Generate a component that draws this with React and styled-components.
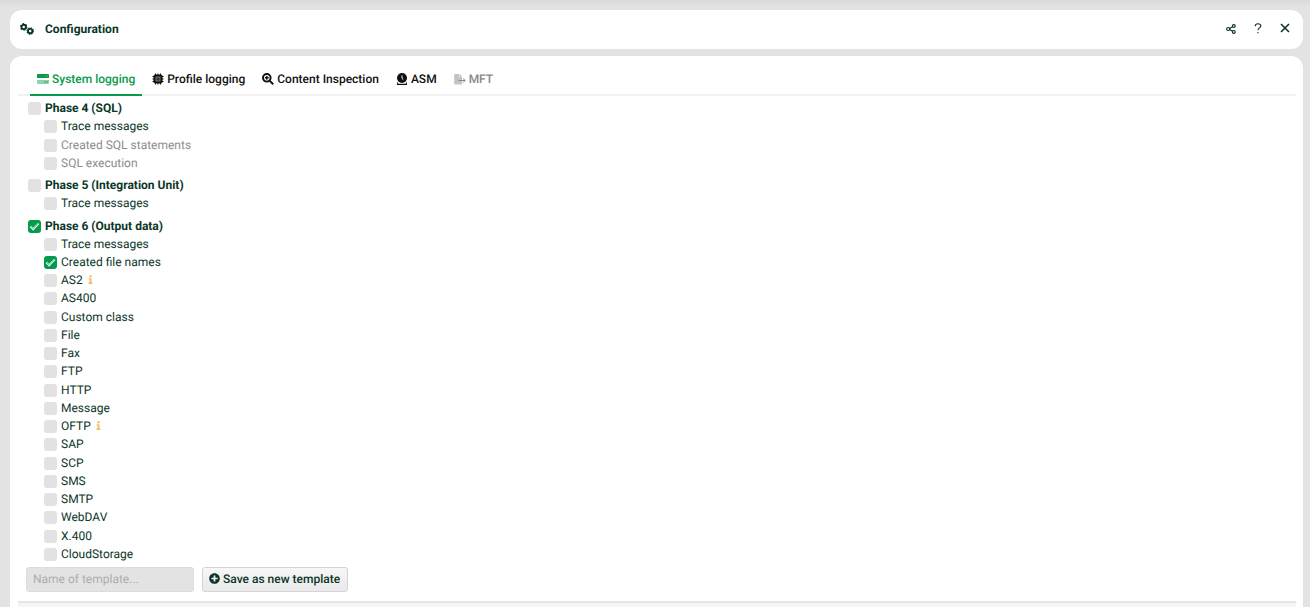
import { useState } from 'react';
import styled, { createGlobalStyle } from 'styled-components';
import { FaPlusCircle } from 'react-icons/fa';

const GlobalStyle = createGlobalStyle`
    * {
        box-sizing: border-box;
    }

    body {
        margin: 0;
        background: #e3e3e3;
        color: #0b3627;
        font-family: Roboto, 'Liberation Sans', sans-serif;
        font-size: 12px;
        text-rendering: geometricPrecision;
    }

    button,
    input {
        text-rendering: inherit;
    }
`;

const Page = styled.div`
    height: 100vh;
    min-height: 600px;
    padding: 10px 7px 0 10px;
    display: flex;
    flex-direction: column;
    gap: 7px;
    overflow: hidden;
    background: linear-gradient(#d9d9d9, #e3e3e3 6px);
`;

const Header = styled.header`
    height: 39px;
    padding: 0 11px 2px 10px;
    display: flex;
    align-items: center;
    flex-shrink: 0;
    border-radius: 12px;
    background: #fff;
`;

const Title = styled.h1`
    flex: 1;
    margin: 0 0 0 11px;
    font-size: 12px;
    font-weight: 700;
`;

const HeaderActions = styled.div`
    display: flex;
    gap: 12px;
`;

const IconButton = styled.button`
    width: 15px;
    height: 20px;
    padding: 0;
    display: flex;
    align-items: center;
    justify-content: center;
    border: 0;
    background: none;
    color: #0b3627;
    cursor: pointer;
`;

const Panel = styled.main`
    flex: 1;
    min-height: 0;
    padding: 8px 7px 0 8px;
    display: flex;
    flex-direction: column;
    border-radius: 12px 12px 0 0;
    background: #fff;
`;

const Tabs = styled.nav`
    height: 32px;
    padding-left: 12px;
    display: flex;
    gap: 3px;
    flex-shrink: 0;
    border-bottom: 2px solid #f1f1f1;
`;

const Tab = styled.button`
    height: 32px;
    padding: 0 7px;
    display: flex;
    align-items: center;
    gap: 3px;
    border: 0;
    border-bottom: 2px solid ${({ $active }) => ($active ? '#049b4c' : 'transparent')};
    background: none;
    color: ${({ $active }) => ($active ? '#049b4c' : '#111')};
    font: 500 12px Roboto, sans-serif;
    cursor: pointer;

    &:disabled {
        color: #888;
        cursor: default;
    }
`;

const Tree = styled.ul`
    flex: 1;
    min-height: 0;
    margin: 0;
    padding: 3px 0 0 10px;
    display: flex;
    flex-direction: column;
    list-style: none;
`;

const Row = styled.li`
    flex: 1 0 18px;
    max-height: 20px;
    margin-top: ${({ $spaced }) => ($spaced ? '4px' : '0')};
    padding-left: ${({ $child }) => ($child ? '16px' : '0')};
    display: flex;
    align-items: center;
`;

const Label = styled.label`
    display: flex;
    align-items: center;
    gap: 4px;
    line-height: 14px;
    font-weight: ${({ $bold }) => ($bold ? 700 : 400)};
    color: ${({ $muted }) => ($muted ? '#8c8c8c' : '#0b3627')};
`;

const Checkbox = styled.input.attrs({ type: 'checkbox' })`
    appearance: none;
    width: 13px;
    height: 13px;
    margin: 1px 0 0;
    display: flex;
    align-items: center;
    justify-content: center;
    border-radius: 3px;
    background: #e2e2e2;

    &:checked {
        background: #049b4c;
    }

    &:checked::after {
        content: '';
        width: 8px;
        height: 4px;
        margin-bottom: 2px;
        border-left: 1px solid #fff;
        border-bottom: 1px solid #fff;
        box-shadow: inset 1px -1px 0 #ffffff99;
        transform: rotate(-45deg);
    }
`;

const InfoMark = styled.svg`
    margin: 0 0 2px 5px;
    color: #f6bc62;
`;

const TemplateBar = styled.form`
    padding: 4px 8px 9px;
    display: flex;
    gap: 8px;
    flex-shrink: 0;
`;

const TemplateInput = styled.input`
    width: 168px;
    height: 25px;
    padding: 0 6px 2px;
    border: 1px solid #dcdcdc;
    border-radius: 3px;
    background: #e3e3e3;
    font: 400 12px Roboto, sans-serif;

    &::placeholder {
        color: #adadad;
    }
`;

const SaveButton = styled.button`
    height: 25px;
    padding: 0 7px 2px 6px;
    display: flex;
    align-items: center;
    gap: 3px;
    border: 1px solid #d4d4d4;
    border-radius: 3px;
    background: linear-gradient(#f7f7f7, #e9e9e9);
    color: #0b3627;
    font: 500 12px Roboto, sans-serif;
    cursor: pointer;
`;

const Footer = styled.footer`
    height: 6px;
    flex-shrink: 0;
    border-top: 2px solid #e6e6e6;
    background: #f6f6f6;
`;

const GearsIcon = () => (
    <svg width="14" height="12" viewBox="0 0 14 12" fill="none" stroke="currentColor">
        <circle cx="3.7" cy="3.9" r="2.2" strokeWidth="1.9" />
        <circle cx="3.7" cy="3.9" r="3.2" strokeWidth="1.2" strokeDasharray="1.7 1.65" />
        <circle cx="10.2" cy="8.1" r="2.2" strokeWidth="1.9" />
        <circle cx="10.2" cy="8.1" r="3.2" strokeWidth="1.2" strokeDasharray="1.3 1.21" />
    </svg>
);

const ServerIcon = () => (
    <svg width="12" height="12" viewBox="0 0 12 12" fill="currentColor">
        <path d="M1 1h10a1 1 0 0 1 1 1v3H0V2a1 1 0 0 1 1-1z" />
        <path d="M0 7h12v3a1 1 0 0 1-1 1H1a1 1 0 0 1-1-1z" opacity=".45" />
        <path d="M8 3.2h1M10 3.2h1" stroke="#fff" strokeWidth=".8" opacity=".5" />
        <path d="M7.5 9H9M10 9h1" stroke="currentColor" />
    </svg>
);

const ChipIcon = () => (
    <svg width="12" height="12" viewBox="0 0 12 12" fill="none" stroke="currentColor">
        <path d="M3.5 .5v11M6 .5v11M8.5 .5v11M.5 3.5h11M.5 6h11M.5 8.5h11" />
        <rect x="2" y="2" width="8" height="8" rx="1" fill="currentColor" />
        <rect x="4" y="4" width="4" height="4" fill="#333" stroke="#999" strokeWidth=".7" />
    </svg>
);

const ZoomIcon = () => (
    <svg width="12" height="12" viewBox="0 0 12 12" fill="none" stroke="currentColor">
        <circle cx="4.8" cy="4.8" r="3.8" strokeWidth="2" />
        <path d="M7.6 7.6l3.6 3.6" strokeWidth="2" />
        <path d="M4.8 2.9v3.8M2.9 4.8h3.8" strokeWidth="1.4" />
    </svg>
);

const MonitorIcon = () => (
    <svg width="12" height="12" viewBox="0 0 12 12" fill="currentColor">
        <circle cx="6" cy="5" r="5" />
        <path d="M1 9l2 1.4h6L11 9v3H1z" />
        <path d="M6 2.4v3l1.3 1.2" fill="none" stroke="#fff" />
        <path d="M1.8 10.5h8.4" stroke="#fff" strokeWidth=".6" />
    </svg>
);

const TransferIcon = () => (
    <svg width="12" height="12" viewBox="0 0 12 12" fill="currentColor">
        <path d="M1 1h4v3h3v7.5H1a.8.8 0 0 1-.8-.8V1.8A.8.8 0 0 1 1 1z" opacity=".5" />
        <path d="M5.6 1L8 3.4H5.6z" opacity=".7" />
        <path d="M4.5 7.5h6.6M9.2 5.6l2 1.9-2 1.9" fill="none" stroke="currentColor" />
    </svg>
);

const ShareIcon = () => (
    <svg width="10" height="10" viewBox="0 0 10 10" fill="none" stroke="currentColor" strokeWidth="1.2">
        <path d="M3.6 4.4l3-1.7M3.6 5.6l3 1.7" />
        <circle cx="2.2" cy="5" r="1.5" />
        <circle cx="7.8" cy="2.1" r="1.4" />
        <circle cx="7.8" cy="7.9" r="1.4" />
    </svg>
);

const HelpIcon = () => (
    <svg width="8" height="11" viewBox="0 0 8 11" fill="none" stroke="currentColor" strokeWidth="1.1">
        <path d="M1.2 3.2C1.2 1.6 2.3.8 4 .8s2.8.8 2.8 2.2c0 1.9-2.8 2-2.8 4.2" />
        <path d="M4 8.9v1.4" />
    </svg>
);

const CloseIcon = () => (
    <svg width="10" height="12" viewBox="0 0 10 12" stroke="currentColor" strokeWidth="1.6">
        <path d="M1 1l8 8M9 1L1 9" />
    </svg>
);

const TABS = [
    { name: 'System logging', icon: <ServerIcon /> },
    { name: 'Profile logging', icon: <ChipIcon /> },
    { name: 'Content Inspection', icon: <ZoomIcon /> },
    { name: 'ASM', icon: <MonitorIcon /> },
    { name: 'MFT', icon: <TransferIcon />, disabled: true },
];

const PHASES = [
    {
        name: 'Phase 4 (SQL)',
        items: [
            { name: 'Trace messages' },
            { name: 'Created SQL statements', muted: true },
            { name: 'SQL execution', muted: true },
        ],
    },
    { name: 'Phase 5 (Integration Unit)', items: [{ name: 'Trace messages' }] },
    {
        name: 'Phase 6 (Output data)',
        checked: true,
        items: [
            { name: 'Trace messages' },
            { name: 'Created file names', checked: true },
            { name: 'AS2', info: true },
            { name: 'AS400' },
            { name: 'Custom class' },
            { name: 'File' },
            { name: 'Fax' },
            { name: 'FTP' },
            { name: 'HTTP' },
            { name: 'Message' },
            { name: 'OFTP', info: true },
            { name: 'SAP' },
            { name: 'SCP' },
            { name: 'SMS' },
            { name: 'SMTP' },
            { name: 'WebDAV' },
            { name: 'X.400' },
            { name: 'CloudStorage' },
        ],
    },
];

// one flat list, so that all rows share the free height evenly
const ROWS = PHASES.flatMap((phase, index) => [
    { ...phase, id: phase.name, phase: true, spaced: index > 0 },
    ...phase.items.map((item) => ({ ...item, id: `${phase.name}/${item.name}` })),
]);

const App = () => {
    const [activeTab, setActiveTab] = useState('System logging');
    const [templateName, setTemplateName] = useState('');

    return (
        <>
            <GlobalStyle />
            <Page>
                <Header>
                    <GearsIcon />
                    <Title>Configuration</Title>
                    <HeaderActions>
                        <IconButton aria-label="Share">
                            <ShareIcon />
                        </IconButton>
                        <IconButton aria-label="Help">
                            <HelpIcon />
                        </IconButton>
                        <IconButton aria-label="Close">
                            <CloseIcon />
                        </IconButton>
                    </HeaderActions>
                </Header>
                <Panel>
                    <Tabs>
                        {TABS.map(({ name, icon, disabled }) => (
                            <Tab
                                key={name}
                                $active={name === activeTab}
                                disabled={disabled}
                                onClick={() => setActiveTab(name)}
                            >
                                {icon}
                                {name}
                            </Tab>
                        ))}
                    </Tabs>
                    <Tree>
                        {ROWS.map((row) => (
                            <Row key={row.id} $child={!row.phase} $spaced={row.spaced}>
                                <Label $bold={row.phase} $muted={row.muted}>
                                    <Checkbox defaultChecked={row.checked} disabled={row.muted} />
                                    {row.name}
                                </Label>
                                {row.info && (
                                    <InfoMark width="5" height="9" viewBox="0 0 5 9" fill="currentColor">
                                        <circle cx="2.5" cy="1.3" r="1.2" />
                                        <path d="M.6 3.2h2.9v4.3h1V9h-4V7.5h1V4.6H.6z" />
                                    </InfoMark>
                                )}
                            </Row>
                        ))}
                    </Tree>
                    <TemplateBar onSubmit={(event) => event.preventDefault()}>
                        <TemplateInput
                            aria-label="Name of template"
                            placeholder="Name of template..."
                            value={templateName}
                            onChange={(event) => setTemplateName(event.target.value)}
                        />
                        <SaveButton>
                            <FaPlusCircle size={11} />
                            Save as new template
                        </SaveButton>
                    </TemplateBar>
                    <Footer />
                </Panel>
            </Page>
        </>
    );
};

export default App;
